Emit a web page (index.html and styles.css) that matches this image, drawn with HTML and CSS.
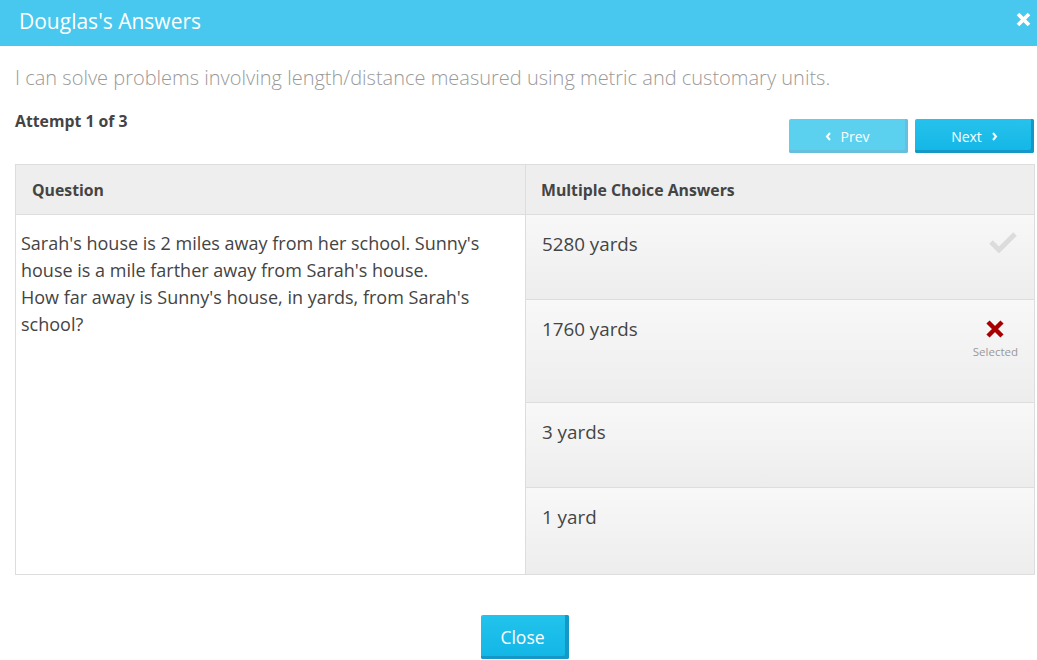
FILE: index.html
```html
<!DOCTYPE html>
<html>
<head>
<meta charset="utf-8">
<link rel="stylesheet" href="styles.css">
</head>
<body>
<div class="modal">
  <div class="header">
    <span class="title">Douglas's Answers</span>
    <svg class="close-x" width="15" height="15" viewBox="0 0 15 15"><path d="M2 2 L13 13 M13 2 L2 13" stroke="#fff" stroke-width="3.8" stroke-linecap="butt"/></svg>
  </div>
  <div class="content">
    <div class="standard">I can solve problems involving length/distance measured using metric and customary units.</div>
    <div class="toolbar">
      <div class="attempt">Attempt 1 of 3</div>
      <div class="nav">
        <button class="btn btn-prev"><svg width="7" height="9" viewBox="0 0 7 9"><path d="M5 1 L2 4.5 L5 8" fill="none" stroke="#fff" stroke-width="2"/></svg><span>Prev</span></button>
        <button class="btn btn-next"><span>Next</span><svg width="7" height="9" viewBox="0 0 7 9"><path d="M2 1 L5 4.5 L2 8" fill="none" stroke="#fff" stroke-width="2"/></svg></button>
      </div>
    </div>
    <div class="table">
      <div class="thead">
        <div class="th th-q">Question</div>
        <div class="th th-a">Multiple Choice Answers</div>
      </div>
      <div class="tbody">
        <div class="question">Sarah's house is 2 miles away from her school. Sunny's house is a mile farther away from Sarah's house.<br>How far away is Sunny's house, in yards, from Sarah's school?</div>
        <div class="answers">
          <div class="answer a1">
            <span>5280 yards</span>
            <svg class="check" width="30" height="22" viewBox="0 0 30 22"><path d="M3 11 L11 19 L27 3" fill="none" stroke="#dcdcdc" stroke-width="5"/></svg>
          </div>
          <div class="answer a2">
            <span>1760 yards</span>
            <div class="mark">
              <svg width="20" height="20" viewBox="0 0 20 20"><path d="M3 3 L17 17 M17 3 L3 17" stroke="#a80000" stroke-width="4.5"/></svg>
              <div class="sel">Selected</div>
            </div>
          </div>
          <div class="answer a3"><span>3 yards</span></div>
          <div class="answer a4"><span>1 yard</span></div>
        </div>
      </div>
    </div>
    <div class="footer">
      <button class="btn btn-close">Close</button>
    </div>
  </div>
</div>
</body>
</html>
```
FILE: styles.css
```css
* { box-sizing: border-box; }
html, body { margin: 0; padding: 0; background: #fff; }
body { font-family: "Open Sans", "Noto Sans", sans-serif; color: #444; width: 1037px; height: 660px; overflow: hidden; }
.header {
  height: 46px;
  background: #48c8ee;
  display: flex;
  align-items: center;
  justify-content: space-between;
  padding: 0 6px 0 19px;
}
.title { color: #fff; font-size: 21px; line-height: 26px; margin-top: -5px; }
.close-x { margin-top: -7px; }
.content { padding: 0 3px 0 15px; }
.standard {
  margin-top: 19px;
  font-size: 20px;
  font-weight: 300;
  color: #9a9a9a;
  line-height: 26px;
}
.toolbar {
  display: flex;
  justify-content: space-between;
  align-items: flex-start;
  margin-top: 17px;
  height: 56px;
}
.attempt { font-weight: 700; font-size: 15.8px; color: #444; line-height: 20px; margin-top: 3px; }
.nav { display: flex; gap: 7px; margin-top: 11px; }
.btn {
  border: none;
  color: #fff;
  font-family: "Open Sans", sans-serif;
  font-size: 14px;
  border-radius: 2px;
  display: flex;
  align-items: center;
  justify-content: center;
  gap: 9px;
  cursor: pointer;
  padding: 0;
}
.btn-prev {
  width: 119px; height: 34px;
  background: #5cd0ef;
  box-shadow: inset -3px -3px 0 #66bfdc;
}
.btn-next {
  width: 119px; height: 34px;
  background: linear-gradient(#27c2ec, #12b6e6);
  box-shadow: inset -3px -3px 0 #1498c8;
}
.btn-prev span { margin-right: 3px; }
.table {
  border: 1px solid #ddd;
  width: 1020px;
}
.thead {
  display: flex;
  background: #eee;
  height: 50px;
  border-bottom: 1px solid #ddd;
}
.th { font-weight: 700; font-size: 15.8px; color: #444; display: flex; align-items: center; }
.th-q { width: 510px; padding-left: 16px; border-right: 1px solid #ddd; }
.th-a { flex: 1; padding-left: 15px; }
.tbody { display: flex; }
.question {
  width: 510px;
  border-right: 1px solid #ddd;
  padding: 15px 8px 0 5px;
  font-size: 18px;
  line-height: 27px;
  color: #444;
}
.answers { flex: 1; }
.answer {
  position: relative;
  background: linear-gradient(#f8f8f8, #ededed);
  border-bottom: 1px solid #ddd;
  padding: 16px 16px 0 16px;
  font-size: 18.8px;
  line-height: 26px;
  color: #444;
  display: flex;
  justify-content: space-between;
  align-items: flex-start;
}
.answer:last-child { border-bottom: none; }
.a1 { height: 85px; }
.a2 { height: 103px; }
.a3 { height: 85px; }
.a4 { height: 86px; }
.check { margin-top: 0; margin-right: 0; }
.mark { display: flex; flex-direction: column; align-items: center; margin-top: 3px; margin-right: 0px; }
.sel { font-size: 11.5px; color: #999; line-height: 14px; margin-top: 6px; }
.footer { display: flex; justify-content: center; margin-top: 40px; }
.btn-close {
  width: 88px; height: 44px;
  font-size: 17.5px;
  background: linear-gradient(#22c3ec, #12b6e6);
  box-shadow: inset -4px -3px 0 #1498c8;
  padding-right: 4px;
}
```
